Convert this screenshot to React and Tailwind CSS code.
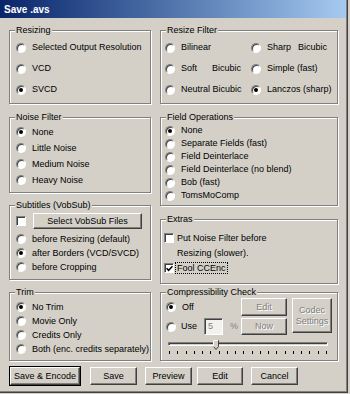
import React from "react";

// --- CONTROLES ESTILO WIN2000 ---

const Radio = ({ checked }) => (
  <span className="flex h-[10px] w-[10px] shrink-0 items-center justify-center rounded-full border border-t-[#808080] border-l-[#808080] border-r-white border-b-white bg-white shadow-[inset_1px_1px_0_#404040]">
    {checked && <span className="h-[4px] w-[4px] rounded-full bg-black" />}
  </span>
);

const Check = ({ checked }) => (
  <span className="flex h-[10px] w-[10px] shrink-0 items-center justify-center border border-t-[#808080] border-l-[#808080] border-r-white border-b-white bg-white shadow-[inset_1px_1px_0_#404040]">
    {checked && (
      <svg width="7" height="7" viewBox="0 0 7 7">
        <path d="M0.5 3.2 L2.6 5.3 L6.5 1.2" stroke="#000" strokeWidth="1.6" fill="none" />
      </svg>
    )}
  </span>
);

const Option = ({ checked, children, className = "" }) => (
  <div className={`flex items-center gap-[6px] ${className}`}>
    <Radio checked={checked} />
    <span className="whitespace-nowrap">{children}</span>
  </div>
);

const Group = ({ title, className = "", children }) => (
  <div className={`relative border border-[#808080] shadow-[inset_1px_1px_0_#fff,1px_1px_0_#fff] ${className}`}>
    <span className="absolute left-[5px] top-[-6px] bg-[#d4d0c8] px-[1px] leading-[11px]">{title}</span>
    {children}
  </div>
);

const Button = ({ children, disabled, isDefault, className = "" }) => (
  <div
    className={`flex items-center justify-center border border-t-white border-l-white border-b-[#404040] border-r-[#404040] shadow-[inset_-1px_-1px_0_#808080] ${
      isDefault ? "outline outline-1 outline-black" : ""
    } ${disabled ? "text-[#808080] [text-shadow:1px_1px_0_#fff]" : ""} ${className}`}
  >
    {children}
  </div>
);

const ticks = Array.from({ length: 20 });

export default function App() {
  return (
    <div className="h-[394px] w-[350px] bg-[#d4d0c8] font-['Liberation_Sans',Arial,sans-serif] text-[9px] leading-[11px] text-black">
      <div className="flex h-[393px] w-[348px] flex-col shadow-[inset_-1px_-1px_0_#404040,inset_-2px_-2px_0_#808080]">
        {/* barra de título */}
        <div className="flex h-[18px] w-[346px] shrink-0 items-center bg-gradient-to-r from-[#0a246a] to-[#a6caf0] pl-[4px] text-[10px] font-bold text-white">
          Save .avs
        </div>

        <div className="flex gap-[9px] pl-[9px] pt-[12px]">
          {/* columna izquierda */}
          <div className="flex w-[142px] flex-col">
            <Group title="Resizing" className="h-[74px] pl-[6px] pt-[6px]">
              <Option className="h-[21px]">Selected Output Resolution</Option>
              <Option className="h-[21px]">VCD</Option>
              <Option className="h-[21px]" checked>SVCD</Option>
            </Group>

            <Group title="Noise Filter" className="mt-[13px] h-[76px] pl-[6px] pt-[6px]">
              <Option className="h-[16px]" checked>None</Option>
              <Option className="h-[16px]">Little Noise</Option>
              <Option className="h-[16px]">Medium Noise</Option>
              <Option className="h-[16px]">Heavy Noise</Option>
            </Group>

            <Group title="Subtitles (VobSub)" className="mt-[12px] h-[75px] pl-[6px] pt-[7px]">
              <div className="flex h-[16px] items-center gap-[7px]">
                <Check />
                <Button className="h-[16px] w-[109px]">Select VobSub Files</Button>
              </div>
              <div className="mt-[3px]">
                <Option className="h-[14px]">before Resizing (default)</Option>
                <Option className="h-[14px]" checked>after Borders (VCD/SVCD)</Option>
                <Option className="h-[14px]">before Cropping</Option>
              </div>
            </Group>

            <Group title="Trim" className="mt-[12px] h-[69px] pl-[6px] pt-[7px]">
              <Option className="h-[14px]" checked>No Trim</Option>
              <Option className="h-[14px]">Movie Only</Option>
              <Option className="h-[14px]">Credits Only</Option>
              <Option className="h-[14px]">Both (enc. credits separately)</Option>
            </Group>
          </div>

          {/* columna derecha */}
          <div className="flex w-[178px] flex-col">
            <Group title="Resize Filter" className="h-[74px] pl-[4px] pt-[6px]">
              <div className="grid grid-cols-[86px_1fr]">
                <Option className="h-[21px]">Bilinear</Option>
                <Option className="h-[21px]">
                  <span className="inline-block w-[31px]">Sharp</span>Bicubic
                </Option>
                <Option className="h-[21px]">
                  <span className="inline-block w-[31px]">Soft</span>Bicubic
                </Option>
                <Option className="h-[21px]">Simple (fast)</Option>
                <Option className="h-[21px]">Neutral Bicubic</Option>
                <Option className="h-[21px]" checked>Lanczos (sharp)</Option>
              </div>
            </Group>

            <Group title="Field Operations" className="mt-[13px] h-[89px] pl-[4px] pt-[6px]">
              <Option className="h-[13px]" checked>None</Option>
              <Option className="h-[13px]">Separate Fields (fast)</Option>
              <Option className="h-[13px]">Field Deinterlace</Option>
              <Option className="h-[13px]">Field Deinterlace (no blend)</Option>
              <Option className="h-[13px]">Bob (fast)</Option>
              <Option className="h-[13px]">TomsMoComp</Option>
            </Group>

            <Group title="Extras" className="mt-[13px] h-[65px] pl-[3px] pt-[13px]">
              <div className="flex items-start gap-[2px]">
                <Check />
                <div className="flex flex-col">
                  <span className="px-[1px] leading-[11px]">Put Noise Filter before</span>
                  <span className="mt-[4px] px-[1px] leading-[11px]">Resizing (slower).</span>
                </div>
              </div>
              <div className="mt-[3px] flex items-center gap-[1px]">
                <Check checked />
                <span className="border border-dotted border-black px-[1px] leading-[10px]">Fool CCEnc</span>
              </div>
            </Group>

            <Group title="Compressibility Check" className="mt-[8px] h-[69px] pl-[5px] pt-[5px]">
              <div className="flex">
                <div className="flex w-[75px] flex-col gap-[2px]">
                  <Option className="h-[18px] gap-[5px]" checked>Off</Option>
                  <div className="flex h-[17px] items-center gap-[5px]">
                    <Radio />
                    <span>Use</span>
                    <span className="ml-[2px] flex h-[17px] w-[19px] items-center border border-t-[#808080] border-l-[#808080] border-r-white border-b-white bg-[#f4f2ee] pl-[3px] text-[#808080] shadow-[inset_1px_1px_0_#404040]">
                      5
                    </span>
                    <span className="ml-[2px] text-[#808080]">%</span>
                  </div>
                </div>
                <div className="flex w-[46px] flex-col gap-[2px]">
                  <Button disabled className="h-[18px]">Edit</Button>
                  <Button disabled className="h-[17px]">Now</Button>
                </div>
                <Button disabled className="ml-[5px] h-[35px] w-[40px] flex-col">
                  <span>Codec</span>
                  <span>Settings</span>
                </Button>
              </div>

              {/* deslizador */}
              <div className="relative ml-[2px] mt-[7px] w-[160px]">
                <div className="h-[4px] border border-t-[#808080] border-l-[#808080] border-r-white border-b-white bg-[#d4d0c8] shadow-[inset_1px_1px_0_#404040]" />
                <svg className="absolute left-[45px] top-[-2px]" width="6" height="10" viewBox="0 0 6 10">
                  <path d="M0.5 0.5 H5.5 V6.5 L3 9.5 L0.5 6.5 Z" fill="#d4d0c8" stroke="#404040" strokeWidth="1" />
                  <path d="M0.5 6.5 V0.5 H5" stroke="#fff" strokeWidth="1" fill="none" />
                </svg>
                <div className="mt-[5px] flex justify-between px-[1px]">
                  {ticks.map((_, i) => (
                    <span key={i} className="h-[3px] w-[1px] bg-black" />
                  ))}
                </div>
              </div>
            </Group>
          </div>
        </div>

        {/* botones */}
        <div className="mt-[6px] flex h-[18px] pl-[10px]">
          <Button isDefault className="w-[70px]">Save &amp; Encode</Button>
          <Button className="ml-[10px] w-[47px]">Save</Button>
          <Button className="ml-[8px] w-[47px]">Preview</Button>
          <Button className="ml-[5px] w-[46px]">Edit</Button>
          <Button className="ml-[8px] w-[47px]">Cancel</Button>
        </div>
      </div>
    </div>
  );
}
